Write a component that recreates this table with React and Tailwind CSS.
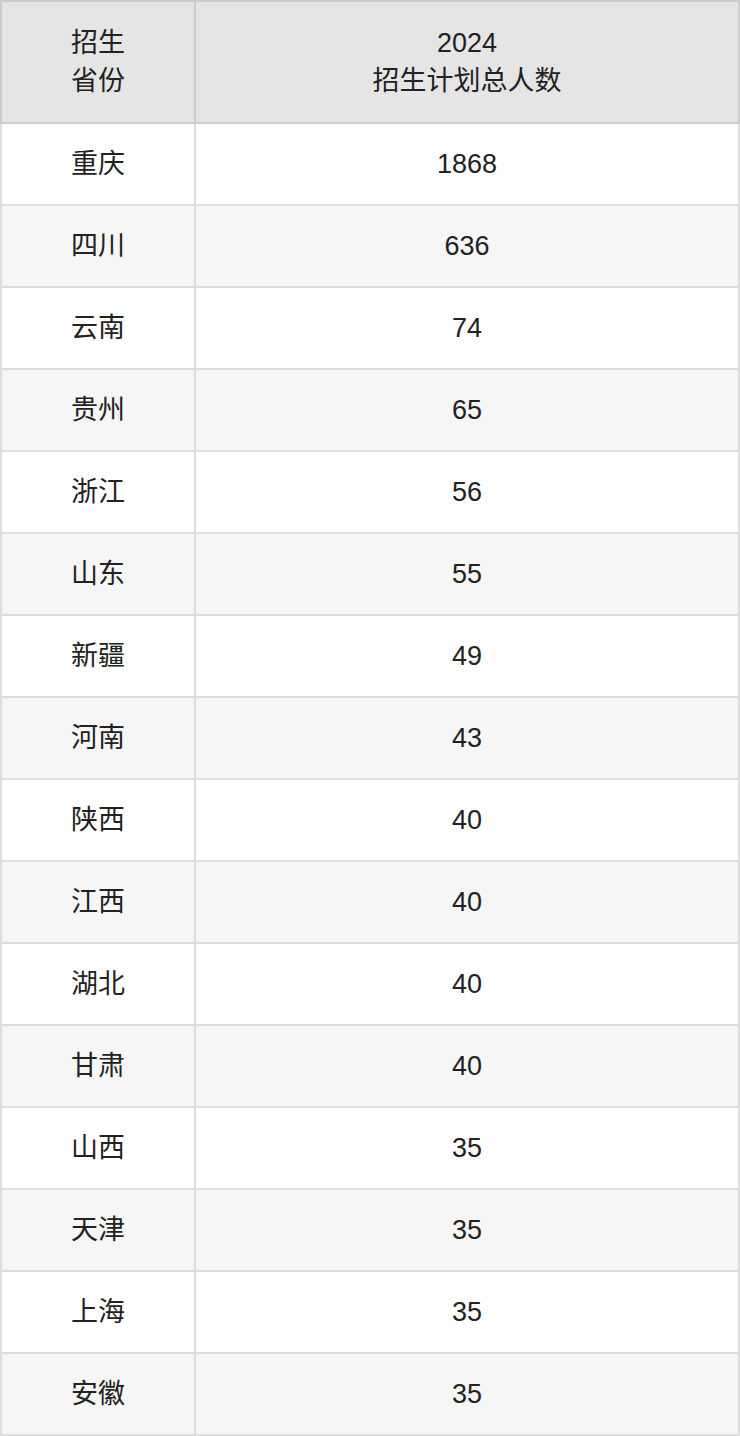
const rows = [
  ["重庆", "1868"],
  ["四川", "636"],
  ["云南", "74"],
  ["贵州", "65"],
  ["浙江", "56"],
  ["山东", "55"],
  ["新疆", "49"],
  ["河南", "43"],
  ["陕西", "40"],
  ["江西", "40"],
  ["湖北", "40"],
  ["甘肃", "40"],
  ["山西", "35"],
  ["天津", "35"],
  ["上海", "35"],
  ["安徽", "35"],
];

const App = () => {
  return (
    <div
      className="w-[740px] bg-white text-[#222] text-[27px] leading-[38px]"
      style={{ fontFamily: '"Liberation Sans", "Noto Sans CJK SC", sans-serif' }}
    >
      <div className="grid grid-cols-[194px_1fr] h-[124px] border-2 border-[#ccc] bg-[#e5e5e5]">
        <div className="flex items-center justify-center border-r-2 border-[#ccc] text-center">
          招生
          <br />
          省份
        </div>
        <div className="flex items-center justify-center text-center">
          2024
          <br />
          招生计划总人数
        </div>
      </div>
      {rows.map(([name, num], i) => (
        <div
          key={name}
          className={`grid grid-cols-[194px_1fr] h-[82px] border-x-2 border-b-2 border-[#ddd] ${
            i % 2 === 0 ? "bg-white" : "bg-[#f6f6f6]"
          }`}
        >
          <div className="flex items-center justify-center border-r-2 border-[#ddd]">
            {name}
          </div>
          <div className="flex items-center justify-center">{num}</div>
        </div>
      ))}
    </div>
  );
};

export default App;
